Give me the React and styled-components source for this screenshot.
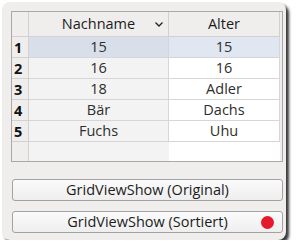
import React from "react";
import styled, { createGlobalStyle } from "styled-components";

const Global = createGlobalStyle`
  html, body { margin: 0; padding: 0; background: #ffffff; }
  body { font-family: "Open Sans", "Noto Sans", sans-serif; }
  * { box-sizing: border-box; }
`;

const Window = styled.div`
  margin: 2px 0 0 2px;
  width: 284px;
  height: 238px;
  border-radius: 8px;
  background: #efeeed;
  box-shadow: 3px 3px 3px rgba(0, 0, 0, 0.78);
  padding: 9px 3px 7px 9px;
  display: flex;
  flex-direction: column;
`;

const Frame = styled.div`
  width: 272px;
  height: 151px;
  border: 1px solid #a9a9a9;
  background: #efeeed;
  padding-right: 2px;
`;

const Grid = styled.div`
  display: grid;
  grid-template-columns: 17px 140px 111px;
  grid-template-rows: 25px repeat(5, 21px) 19px;
  font-size: 14.5px;
`;

const Header = styled.div`
  position: relative;
  display: flex;
  align-items: center;
  justify-content: center;
  background: #efeeed;
  color: #1c1c1c;
  border-bottom: 1px solid #d2d1cf;
  border-right: 1px solid #d2d1cf;
  padding-bottom: 1px;
`;

const Chevron = styled.svg`
  position: absolute;
  right: 5px;
  top: 10px;
`;

const RowHead = styled.div`
  display: flex;
  align-items: center;
  padding-left: 2px;
  background: #efeeed;
  color: #111;
  font-weight: 700;
  border-right: 1px solid #d2d1cf;
  border-bottom: ${(p) => (p.$empty ? "none" : "1px solid #d2d1cf")};
`;

const Cell = styled.div`
  display: flex;
  align-items: center;
  justify-content: center;
  color: #2e2e2e;
  border-right: ${(p) => (p.$empty ? "none" : "1px solid #d6d6d6")};
  border-bottom: ${(p) => (p.$empty ? "none" : "1px solid #d6d6d6")};
  background: ${(p) =>
    p.$selected
      ? p.$sorted
        ? "#d8dfeb"
        : "#e0e7f2"
      : p.$sorted
      ? "#f3f3f3"
      : "#ffffff"};
  padding-bottom: 1px;
`;

const Buttons = styled.div`
  margin-top: 17px;
  padding-left: 1px;
  display: flex;
  flex-direction: column;
  gap: 10px;
`;

const Button = styled.button`
  position: relative;
  width: 271px;
  height: 22px;
  border: 1px solid #a3a3a3;
  border-radius: 3px;
  background: linear-gradient(#fbfbfb, #eeeeee);
  font-family: "Open Sans", "Noto Sans", sans-serif;
  font-size: 14.5px;
  color: #1c1c1c;
  padding: 0 0 1px 0;
  display: flex;
  align-items: center;
  justify-content: center;
`;

const Dot = styled.span`
  position: absolute;
  right: 8px;
  top: 4px;
  width: 13px;
  height: 13px;
  border-radius: 50%;
  background: #e5182c;
`;

const rows = [
  ["15", "15"],
  ["16", "16"],
  ["18", "Adler"],
  ["Bär", "Dachs"],
  ["Fuchs", "Uhu"],
];

export default function App() {
  return (
    <>
      <Global />
      <Window>
        <Frame>
          <Grid>
            <Header />
            <Header>
              Nachname
              <Chevron width="8" height="5" viewBox="0 0 8 5">
                <path d="M0.5 0.5 L4 4 L7.5 0.5" fill="none" stroke="#222" strokeWidth="1.3" />
              </Chevron>
            </Header>
            <Header>Alter</Header>
            {rows.map(([a, b], i) => (
              <React.Fragment key={i}>
                <RowHead>{i + 1}</RowHead>
                <Cell $sorted $selected={i === 0}>{a}</Cell>
                <Cell $selected={i === 0}>{b}</Cell>
              </React.Fragment>
            ))}
            <RowHead $empty />
            <Cell $sorted $empty />
            <Cell $empty />
          </Grid>
        </Frame>
        <Buttons>
          <Button>GridViewShow (Original)</Button>
          <Button>
            GridViewShow (Sortiert)
            <Dot />
          </Button>
        </Buttons>
      </Window>
    </>
  );
}
